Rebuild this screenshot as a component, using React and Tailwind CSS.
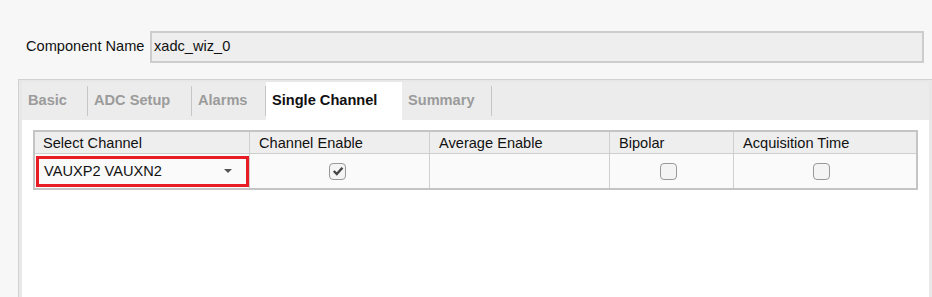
import React from "react";

function Checkbox({ checked }) {
  return (
    <div className="w-[17px] h-[17px] rounded-[4px] border-[1.5px] border-[#999999] bg-[#f4f4f4] flex items-center justify-center">
      {checked && (
        <svg width="12" height="12" viewBox="0 0 12 12">
          <path d="M1.8 6 L4.8 9 L10.4 2.8" fill="none" stroke="#444" strokeWidth="2.4" />
        </svg>
      )}
    </div>
  );
}

const tabs = [
  { label: "Basic", w: "w-[65px]" },
  { label: "ADC Setup", w: "w-[103px]" },
  { label: "Alarms", w: "w-[73px]" },
  { label: "Single Channel", w: "w-[136px]", active: true },
  { label: "Summary", w: "w-[89px]" },
];

export default function App() {
  return (
    <div
      className="w-[932px] h-[297px] bg-[#f7f7f7] overflow-hidden text-[14.6px] text-[#111]"
      style={{ fontFamily: '"Liberation Sans", Arial, sans-serif' }}
    >
      <div className="flex items-center pt-[31px] pl-[26px] pr-[8px]">
        <span className="w-[124px]">Component Name</span>
        <div className="flex-1 h-[32px] bg-[#eeeeee] border-2 border-[#cdcdcd] flex items-center pl-[2px]">
          xadc_wiz_0
        </div>
      </div>

      <div className="mt-[16px] ml-[18px] h-[220px] border-l border-t border-[#d2d2d2] bg-[#e8e8e8] pl-[3px] pt-[2px] pr-[3px] flex flex-col">
        <div className="h-[38px] bg-[#ececec] flex items-stretch">
          {tabs.map((t) => (
            <div key={t.label} className="flex items-stretch">
              <div
                className={`${t.w} flex items-center pl-[6px] font-bold ${
                  t.active ? "bg-white text-[#111]" : "text-[#9b9b9b]"
                }`}
              >
                {t.label}
              </div>
              {!t.active && (
                <div className="flex items-center">
                  <div className="w-px h-[30px] bg-[#c6c6c6]" />
                </div>
              )}
            </div>
          ))}
        </div>
        <div className="flex-1 bg-white pt-[10px] pl-[11px]">
          <div className="w-[885px] border-2 border-[#c4c4c4] bg-[#fafafa]">
            <div className="grid grid-cols-[214px_180px_180px_124px_183px] h-[22px] bg-[#eeeeee] border-b border-[#cfcfcf]">
              {["Select Channel", "Channel Enable", "Average Enable", "Bipolar", "Acquisition Time"].map((h, i) => (
                <div
                  key={h}
                  className={`flex items-center pt-[1px] ${i === 0 ? "pl-[8px]" : "pl-[9px] border-l border-[#cfcfcf]"}`}
                >
                  {h}
                </div>
              ))}
            </div>
            <div className="grid grid-cols-[214px_180px_180px_124px_183px] h-[34px]">
              <div className="pl-[1px] pt-[2px] pb-[1px]">
                <div className="h-full border-[3px] border-[#e81c24] flex items-center justify-between pl-[5px] pr-[14px]">
                  <span>VAUXP2 VAUXN2</span>
                  <svg width="8" height="5" viewBox="0 0 8 5">
                    <path d="M0 0 H8 L4 4 Z" fill="#555" />
                  </svg>
                </div>
              </div>
              <div className="border-l border-[#cfcfcf] flex items-center justify-center pr-[4px]">
                <Checkbox checked />
              </div>
              <div className="border-l border-[#cfcfcf]" />
              <div className="border-l border-[#cfcfcf] flex items-center justify-center pr-[6px]">
                <Checkbox />
              </div>
              <div className="border-l border-[#cfcfcf] flex items-center justify-center pr-[7px]">
                <Checkbox />
              </div>
            </div>
          </div>
        </div>
      </div>
    </div>
  );
}
